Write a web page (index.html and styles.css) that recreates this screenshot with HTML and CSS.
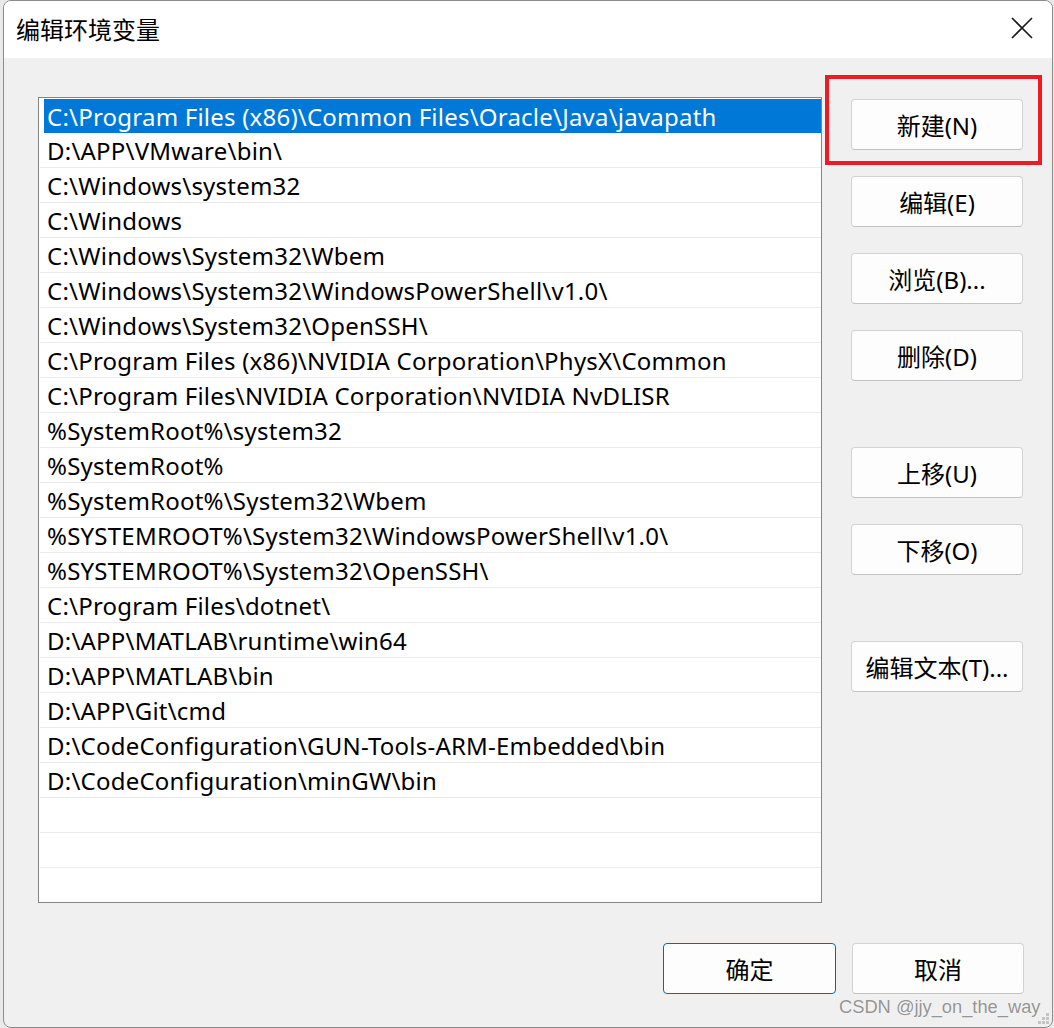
FILE: index.html
```html
<!DOCTYPE html>
<html>
	<head>
		<meta charset="UTF-8">
		<title>编辑环境变量</title>
		<link rel="stylesheet" href="styles.css">
	</head>
	<body>
		<div class="window">
			<div class="titlebar">
				<span class="title">编辑环境变量</span>
				<svg class="close" width="22" height="22" viewBox="0 0 22 22">
					<path d="M1 1 L21 21 M21 1 L1 21" stroke="#1b1b1b" stroke-width="1.6" fill="none"/>
				</svg>
			</div>
			<div class="content">
				<div class="main">
					<div class="list">
						<div class="row selected"><span>C:\Program Files (x86)\Common Files\Oracle\Java\javapath</span></div>
						<div class="row"><span>D:\APP\VMware\bin\</span></div>
						<div class="row"><span>C:\Windows\system32</span></div>
						<div class="row"><span>C:\Windows</span></div>
						<div class="row"><span>C:\Windows\System32\Wbem</span></div>
						<div class="row"><span>C:\Windows\System32\WindowsPowerShell\v1.0\</span></div>
						<div class="row"><span>C:\Windows\System32\OpenSSH\</span></div>
						<div class="row"><span>C:\Program Files (x86)\NVIDIA Corporation\PhysX\Common</span></div>
						<div class="row"><span>C:\Program Files\NVIDIA Corporation\NVIDIA NvDLISR</span></div>
						<div class="row"><span>%SystemRoot%\system32</span></div>
						<div class="row"><span>%SystemRoot%</span></div>
						<div class="row"><span>%SystemRoot%\System32\Wbem</span></div>
						<div class="row"><span>%SYSTEMROOT%\System32\WindowsPowerShell\v1.0\</span></div>
						<div class="row"><span>%SYSTEMROOT%\System32\OpenSSH\</span></div>
						<div class="row"><span>C:\Program Files\dotnet\</span></div>
						<div class="row"><span>D:\APP\MATLAB\runtime\win64</span></div>
						<div class="row"><span>D:\APP\MATLAB\bin</span></div>
						<div class="row"><span>D:\APP\Git\cmd</span></div>
						<div class="row"><span>D:\CodeConfiguration\GUN-Tools-ARM-Embedded\bin</span></div>
						<div class="row"><span>D:\CodeConfiguration\minGW\bin</span></div>
						<div class="row"></div>
						<div class="row"></div>
						<div class="row"></div>
					</div>
					<div class="side">
						<button class="btn">新建(N)</button>
						<button class="btn">编辑(E)</button>
						<button class="btn">浏览(B)...</button>
						<button class="btn">删除(D)</button>
						<button class="btn group">上移(U)</button>
						<button class="btn">下移(O)</button>
						<button class="btn group">编辑文本(T)...</button>
					</div>
				</div>
				<div class="footer">
					<button class="btn ok">确定</button>
					<button class="btn">取消</button>
				</div>
			</div>
			<svg class="grip" width="12" height="12" viewBox="0 0 12 12">
				<rect x="8" y="0" width="3" height="3" fill="#c4c4c4"/>
				<rect x="4" y="4" width="3" height="3" fill="#c4c4c4"/>
				<rect x="8" y="4" width="3" height="3" fill="#c4c4c4"/>
				<rect x="0" y="8" width="3" height="3" fill="#c4c4c4"/>
				<rect x="4" y="8" width="3" height="3" fill="#c4c4c4"/>
				<rect x="8" y="8" width="3" height="3" fill="#c4c4c4"/>
			</svg>
		</div>
		<!-- 红色标注框 -->
		<div class="mark"></div>
		<div class="watermark">CSDN @jjy_on_the_way</div>
	</body>
</html>
```
FILE: styles.css
```css
html,body{
	margin: 0;
	padding: 0;
}
body{
	width: 1054px;
	height: 1028px;
	background: #e9e9e9;
	position: relative;
	overflow: hidden;
	font-family: "Noto Sans", "Noto Sans CJK SC", sans-serif;
}
.window{
	box-sizing: border-box;
	margin-left: 3px;
	width: 1050px;
	height: 1028px;
	border: 1px solid #8c8c8c;
	border-radius: 8px;
	background: #f0f0f0;
	overflow: hidden;
	position: relative;
	display: flex;
	flex-direction: column;
}
.titlebar{
	height: 57px;
	background: #fff;
	display: flex;
	align-items: center;
	justify-content: space-between;
	padding: 0 19px 0 12px;
	flex-shrink: 0;
}
.title{
	font-size: 24px;
	color: #000;
	font-family: "Noto Sans CJK SC", sans-serif;
	margin-top: -2px;
}
.close{
	margin-top: -3px;
}
.content{
	flex: 1;
	padding: 39px 28px 0 34px;
}
.main{
	display: flex;
	gap: 29px;
}
.list{
	box-sizing: border-box;
	width: 784px;
	height: 806px;
	border: 1px solid #848484;
	background: #fff;
	padding: 0 0 0 1px;
	overflow: hidden;
}
.row{
	box-sizing: border-box;
	height: 35px;
	border-bottom: 1px solid #ebebeb;
	font-size: 24px;
	letter-spacing: 0.22px;
	color: #000;
	display: flex;
	align-items: stretch;
	white-space: nowrap;
}
.row span{
	display: flex;
	align-items: center;
	padding-left: 7px;
}
.selected{
	border-bottom: 0;
	padding-top: 1px;
}
.selected span{
	flex: 1;
	margin-left: 4px;
	padding-left: 3px;
	background: #0078d7;
	color: #fff;
}
.side{
	display: flex;
	flex-direction: column;
	gap: 26px;
	padding-top: 2px;
}
.btn{
	box-sizing: border-box;
	width: 172px;
	height: 51px;
	border: 1px solid #d3d3d3;
	border-bottom-color: #c2c2c2;
	border-radius: 4px;
	background: #fdfdfd;
	font-family: "Noto Sans", "Noto Sans CJK SC", sans-serif;
	font-size: 24px;
	color: #000;
	padding: 0;
}
.group{
	margin-top: 40px;
}
.footer{
	display: flex;
	justify-content: flex-end;
	gap: 16px;
	margin-top: 40px;
}
.ok{
	width: 173px;
	border: 1px solid #0067c0;
}
.grip{
	position: absolute;
	right: 2px;
	bottom: 2px;
}
.mark{
	position: absolute;
	left: 825px;
	top: 75px;
	width: 217px;
	height: 90px;
	box-sizing: border-box;
	border: 4px solid #ed1c24;
}
.watermark{
	position: absolute;
	left: 839px;
	top: 996px;
	font-family: "Liberation Sans", Arial, sans-serif;
	font-size: 18.3px;
	color: rgba(120,120,120,0.8);
	text-shadow: 0 0 1px #fff;
}
```
